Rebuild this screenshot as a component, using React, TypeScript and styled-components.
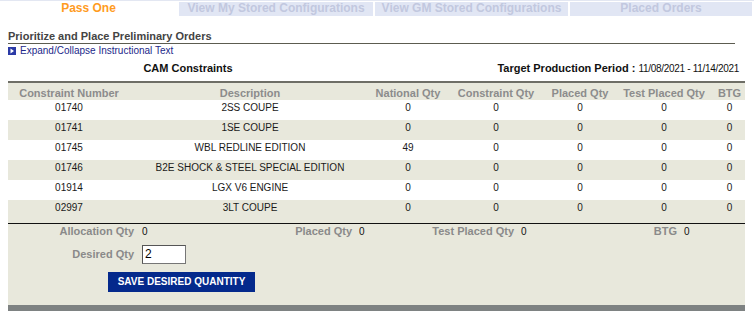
import styled, { createGlobalStyle } from "styled-components";

const GlobalStyle = createGlobalStyle`
  body {
    margin: 0;
    background: #fff;
    font-family: "Liberation Sans", Arial, sans-serif;
  }
`;

const TabBar = styled.div`
  display: flex;
  gap: 2px;
  border-top: 1px solid #e3e7f2;
  padding-top: 1px;
`;
const Tab = styled.div<{ $width: number; $active?: boolean }>`
  width: ${(p) => p.$width}px;
  height: 14px;
  background: ${(p) => (p.$active ? "#fff" : "#e1e6f4")};
  color: ${(p) => (p.$active ? "#ff9c1f" : "#c2c8df")};
  font-size: 12px;
  font-weight: bold;
  line-height: 13px;
  text-align: center;
  white-space: nowrap;
`;

const Content = styled.div`
  width: 737px;
  margin-left: 8px;
`;
const PageTitle = styled.div`
  margin: 13px 10px 0 0;
  font-size: 11px;
  font-weight: bold;
  line-height: 14px;
  color: #444;
  border-bottom: 1px solid #5c5c50;
`;
const ExpandRow = styled.div`
  display: flex;
  align-items: center;
  gap: 4px;
  height: 12px;
  margin-top: 1px;
  font-size: 10px;
  line-height: 12px;
  color: #22288a;
`;
const InfoRow = styled.div`
  display: flex;
  margin-top: 4px;
  font-size: 11px;
  font-weight: bold;
  line-height: 14px;
  color: #111;
`;
const TableTitle = styled.div`
  width: 360px;
  text-align: center;
`;
const Period = styled.div`
  margin-left: auto;
  padding-right: 6px;
`;
const PeriodValue = styled.span`
  font-size: 10px;
  font-weight: normal;
  letter-spacing: -0.3px;
`;

const Panel = styled.div`
  margin-top: 5px;
  background: #e8e8dc;
`;
const Table = styled.table`
  width: 737px;
  border-collapse: collapse;
  table-layout: fixed;
  border-top: 2px solid #6e6e66;
  border-bottom: 1px solid #111;
`;
const HeadCell = styled.th`
  height: 18px;
  padding: 4px 0 0;
  vertical-align: top;
  box-sizing: border-box;
  font-size: 11px;
  font-weight: bold;
  line-height: 13px;
  color: #8c8c8c;
  text-align: center;
  white-space: nowrap;
`;
const Row = styled.tr<{ $shaded: boolean }>`
  background: ${(p) => (p.$shaded ? "#e8e8dc" : "#fff")};
  &:last-child td {
    height: 23px;
  }
`;
const Cell = styled.td`
  height: 20px;
  padding: 2px 0 0;
  box-sizing: border-box;
  vertical-align: top;
  font-size: 10px;
  line-height: 12px;
  color: #1a1a1a;
  text-align: center;
  white-space: nowrap;
`;

const Summary = styled.div`
  display: grid;
  grid-template-columns: 130px 152px 66px 74px 88px 102px 61px 64px;
  row-gap: 7px;
  padding: 1px 0 13px;
  align-items: center;
`;
const SumLabel = styled.div`
  padding-right: 4px;
  text-align: right;
  font-size: 11px;
  font-weight: bold;
  line-height: 13px;
  color: #8a8a8a;
  white-space: nowrap;
`;
const SumValue = styled.div<{ $pad?: number }>`
  padding-left: ${(p) => p.$pad ?? 4}px;
  font-size: 10px;
  line-height: 13px;
  color: #111;
`;
const InputCell = styled.div`
  grid-column: 2 / 9;
  display: flex;
`;
const QtyInput = styled.input`
  width: 44px;
  height: 19px;
  box-sizing: border-box;
  margin-left: 4px;
  padding: 0 2px;
  border: 1px solid #767676;
  border-top-color: #555;
  border-left-color: #555;
  background: #fff;
  font-family: "Liberation Sans", Arial, sans-serif;
  font-size: 12px;
  color: #000;
`;
const SaveButton = styled.button`
  grid-column: 1 / 3;
  justify-self: start;
  margin: 1px 0 0 100px;
  width: 147px;
  height: 20px;
  padding: 0;
  border: none;
  background: #04298c;
  color: #fff;
  font-family: "Liberation Sans", Arial, sans-serif;
  font-size: 10px;
  font-weight: bold;
`;
const BottomBar = styled.div`
  height: 6px;
  background: #7e8282;
`;

const ExpandIcon = () => (
  <svg width="8" height="8" viewBox="0 0 8 8">
    <rect width="8" height="8" fill="#2b3aa6" />
    <path d="M2.5 1.5 L6 4 L2.5 6.5 Z" fill="#fff" />
  </svg>
);

const tabs = [
  { label: "Pass One", width: 177, active: true },
  { label: "View My Stored Configurations", width: 194 },
  { label: "View GM Stored Configurations", width: 193 },
  { label: "Placed Orders", width: 182 },
];

const columns = [
  { label: "Constraint Number", width: 122 },
  { label: "Description", width: 240 },
  { label: "National Qty", width: 76 },
  { label: "Constraint Qty", width: 100 },
  { label: "Placed Qty", width: 68 },
  { label: "Test Placed Qty", width: 100 },
  { label: "BTG", width: 31 },
];

const rows = [
  ["01740", "2SS COUPE", "0"],
  ["01741", "1SE COUPE", "0"],
  ["01745", "WBL REDLINE EDITION", "49"],
  ["01746", "B2E SHOCK & STEEL SPECIAL EDITION", "0"],
  ["01914", "LGX V6 ENGINE", "0"],
  ["02997", "3LT COUPE", "0"],
];

export default function App() {
  return (
    <>
      <GlobalStyle />
      <TabBar>
        {tabs.map((t) => (
          <Tab key={t.label} $width={t.width} $active={t.active}>
            {t.label}
          </Tab>
        ))}
      </TabBar>
      <Content>
        <PageTitle>Prioritize and Place Preliminary Orders</PageTitle>
        <ExpandRow>
          <ExpandIcon />
          Expand/Collapse Instructional Text
        </ExpandRow>
        <InfoRow>
          <TableTitle>CAM Constraints</TableTitle>
          <Period>
            Target Production Period : <PeriodValue>11/08/2021 - 11/14/2021</PeriodValue>
          </Period>
        </InfoRow>
        <Panel>
          <Table>
            <colgroup>
              {columns.map((c) => (
                <col key={c.label} style={{ width: c.width }} />
              ))}
            </colgroup>
            <thead>
              <tr>
                {columns.map((c) => (
                  <HeadCell key={c.label}>{c.label}</HeadCell>
                ))}
              </tr>
            </thead>
            <tbody>
              {rows.map(([num, desc, national], i) => (
                <Row key={num} $shaded={i % 2 === 1}>
                  <Cell>{num}</Cell>
                  <Cell>{desc}</Cell>
                  <Cell>{national}</Cell>
                  <Cell>0</Cell>
                  <Cell>0</Cell>
                  <Cell>0</Cell>
                  <Cell>0</Cell>
                </Row>
              ))}
            </tbody>
          </Table>
          <Summary>
            <SumLabel>Allocation Qty</SumLabel>
            <SumValue>0</SumValue>
            <SumLabel>Placed Qty</SumLabel>
            <SumValue $pad={3}>0</SumValue>
            <SumLabel>Test Placed Qty</SumLabel>
            <SumValue $pad={3}>0</SumValue>
            <SumLabel>BTG</SumLabel>
            <SumValue $pad={3}>0</SumValue>

            <SumLabel>Desired Qty</SumLabel>
            <InputCell>
              <QtyInput defaultValue="2" />
            </InputCell>

            <SaveButton>SAVE DESIRED QUANTITY</SaveButton>
          </Summary>
          <BottomBar />
        </Panel>
      </Content>
    </>
  );
}
